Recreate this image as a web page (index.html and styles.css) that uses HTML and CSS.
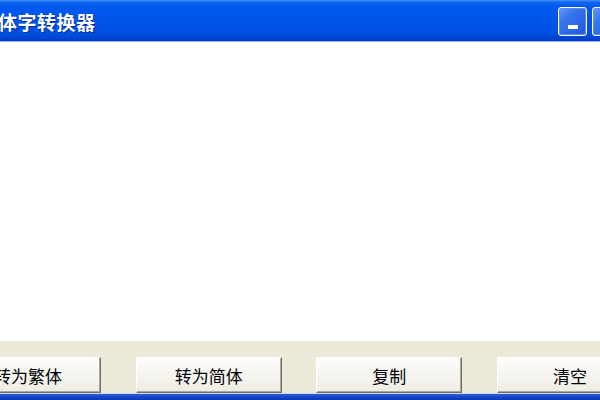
FILE: index.html
```html
<!DOCTYPE html>
<html lang="zh-CN">
<head>
<meta charset="utf-8">
<title>体字转换器</title>
<link rel="stylesheet" href="styles.css">
</head>
<body>
<div class="window">
  <div class="titlebar">
    <div class="title">体字转换器</div>
    <div class="controls">
      <div class="ctl ctl-min"><span class="dash"></span></div>
      <div class="ctl ctl-next"></div>
    </div>
  </div>
  <div class="content"></div>
  <div class="toolbar">
    <div class="buttons">
      <button class="btn">转为繁体</button>
      <button class="btn">转为简体</button>
      <button class="btn">复制</button>
      <button class="btn">清空</button>
    </div>
  </div>
  <div class="frame-bottom"></div>
</div>
</body>
</html>
```

FILE: styles.css
```css
html, body {
  margin: 0;
  padding: 0;
  width: 600px;
  height: 400px;
  overflow: hidden;
  background: #ffffff;
}

.window {
  display: flex;
  flex-direction: column;
  width: 600px;
  height: 400px;
  font-family: "Noto Sans CJK SC", "Noto Sans", sans-serif;
}

.titlebar {
  height: 41px;
  flex: none;
  display: flex;
  align-items: center;
  justify-content: space-between;
  background: linear-gradient(#4a93f8 0px, #1468f2 2px, #0058ee 6px, #0055ea 50%, #0050e2 80%, #0043cf 95%, #003cc4 100%);
  border-bottom: 1px solid #8fb2ef;
}

.title {
  color: #ffffff;
  font-weight: bold;
  font-size: 19px;
  letter-spacing: 0.5px;
  margin-left: -2px;
  margin-top: 1px;
  text-shadow: 1px 1px 0 #0a2a8a;
}

.controls {
  display: flex;
  gap: 5px;
  margin-right: -21px;
  margin-top: 2px;
}

.ctl {
  width: 27px;
  height: 27px;
  border: 1px solid #ffffff;
  border-radius: 3px;
  background: linear-gradient(135deg, #6a9cf6 0%, #3a78ee 30%, #2a62e4 70%, #2455d6 100%);
  box-shadow: inset 0 0 0 1px #5a8cf0;
  position: relative;
}

.dash {
  position: absolute;
  left: 9px;
  top: 17px;
  width: 10px;
  height: 4px;
  background: #ffffff;
}

.content {
  flex: 1;
  background: #ffffff;
}

.toolbar {
  height: 52px;
  flex: none;
  background: #ece9d8;
  padding-top: 16px;
  box-sizing: border-box;
  overflow: hidden;
}

.buttons {
  display: flex;
  justify-content: space-between;
  width: 688px;
  margin-left: -45px;
}

.btn {
  width: 146px;
  height: 36px;
  box-sizing: border-box;
  font-family: "Noto Sans CJK SC", "Noto Sans", sans-serif;
  font-size: 17px;
  color: #000000;
  padding: 0;
  border-top: 1px solid #ffffff;
  border-left: 1px solid #ffffff;
  border-right: 1px solid #716f64;
  border-bottom: 1px solid #716f64;
  box-shadow: inset -1px -1px 0 #aca899;
  background: linear-gradient(#fdfdfb 0%, #f4f3ee 60%, #ecebe4 100%);
  border-radius: 0;
}

.frame-bottom {
  height: 7px;
  flex: none;
  background: linear-gradient(#c8d8f4 0px, #c8d8f4 1px, #2a5fd8 1px, #1845c8 4px, #0b35b8 7px);
}
```
